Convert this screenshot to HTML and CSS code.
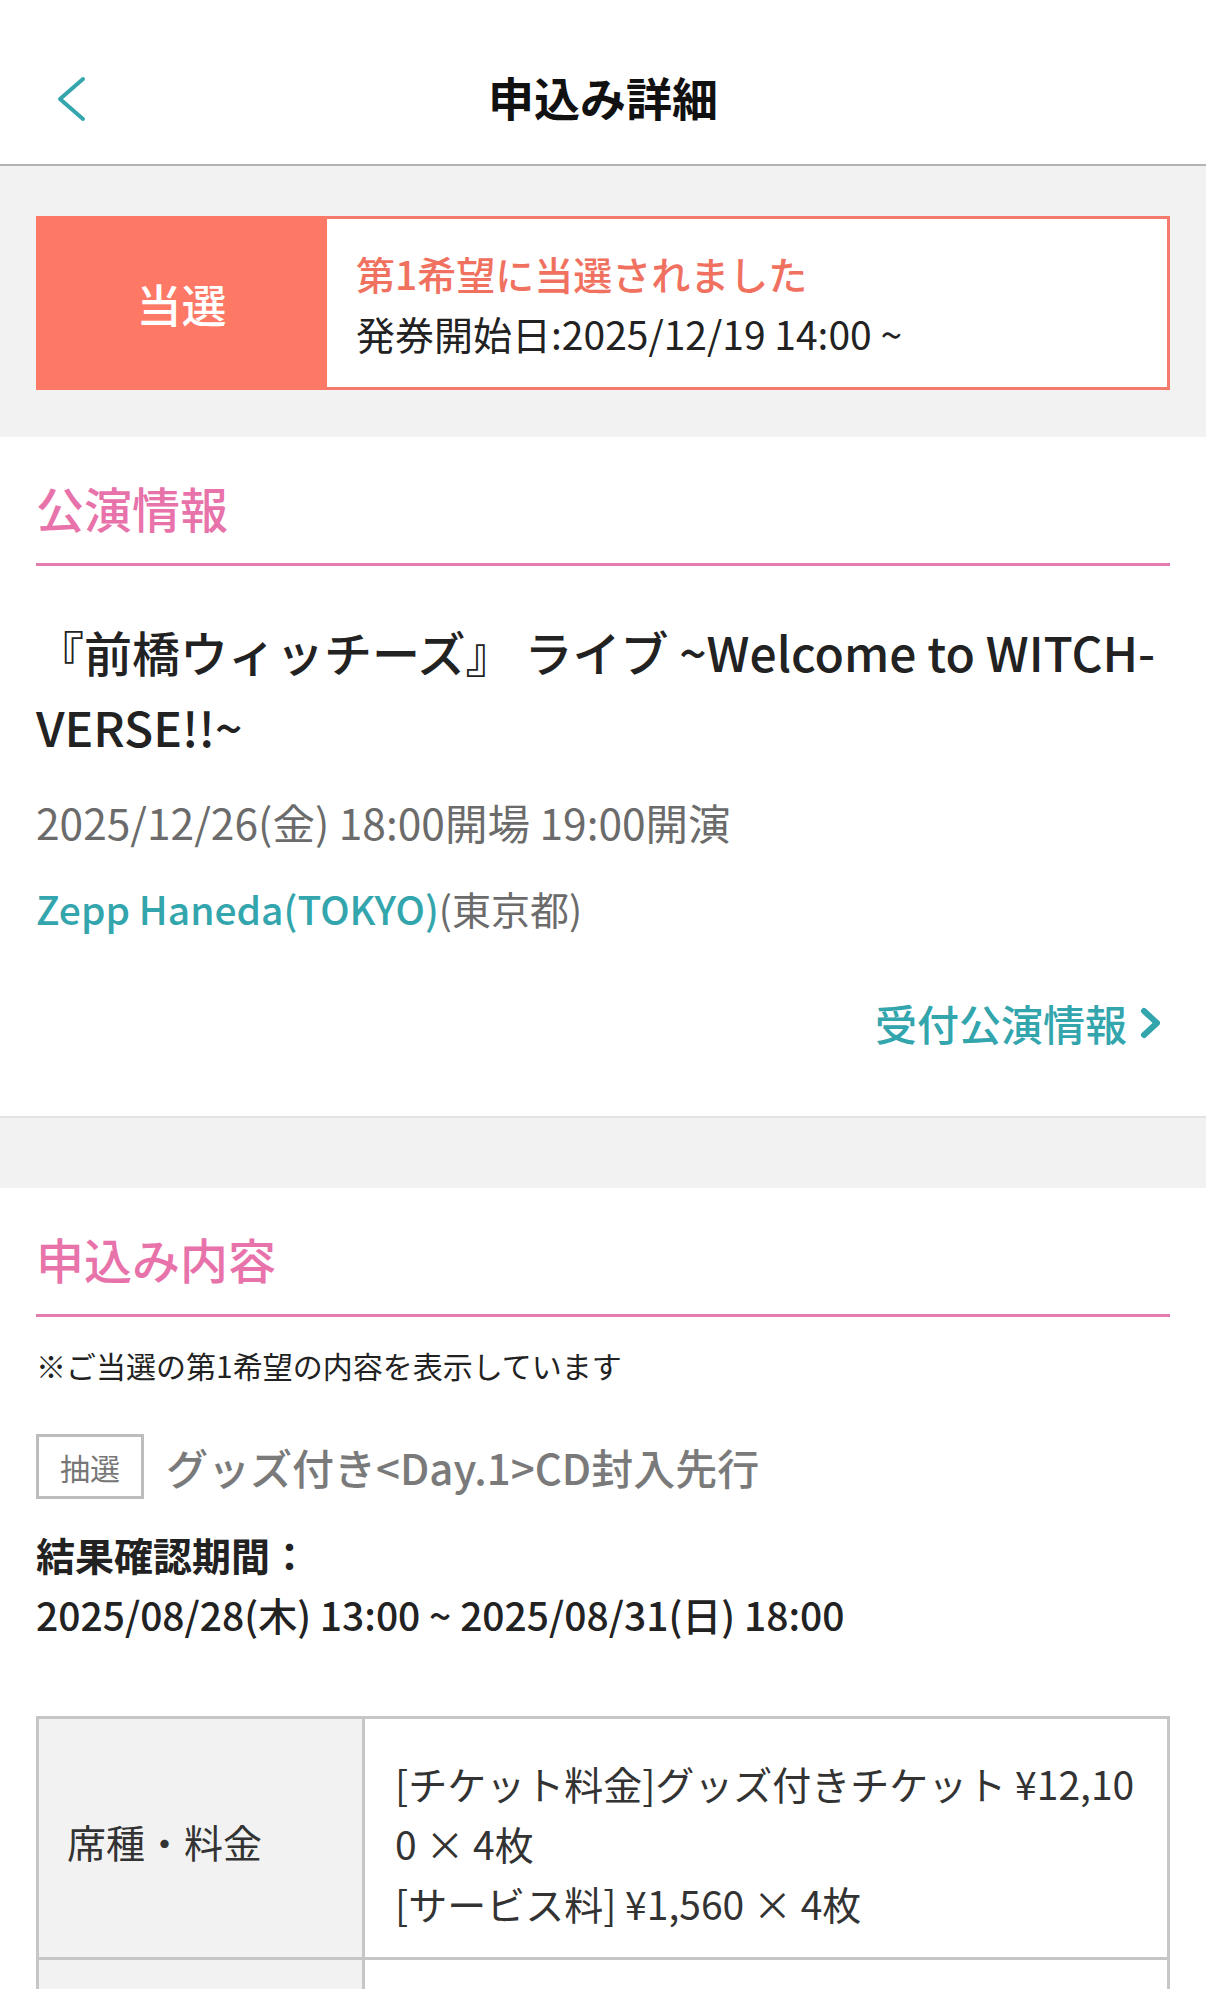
FILE: index.html
```html
<!DOCTYPE html>
<html lang="ja">
<head>
<meta charset="utf-8">
<title>申込み詳細</title>
<link rel="stylesheet" href="styles.css">
</head>
<body>
<header class="topbar">
  <button class="back" type="button" aria-label="戻る">
    <svg width="30" height="46" viewBox="0 0 30 46"><polyline points="26,3 3,23 26,43" fill="none" stroke="#36a6ae" stroke-width="4" stroke-linecap="round" stroke-linejoin="round"/></svg>
  </button>
  <h1 class="title">申込み詳細</h1>
</header>

<div class="status-area">
  <div class="result-banner">
    <div class="result-label">当選</div>
    <div class="result-body">
      <p class="result-title">第1希望に当選されました</p>
      <p class="result-date">発券開始日:2025/12/19 14:00 ~</p>
    </div>
  </div>
</div>

<section class="panel panel-event">
  <h2 class="section-heading">公演情報</h2>
  <p class="event-title">『前橋ウィッチーズ』 ライブ ~Welcome to WITCH-VERSE!!~</p>
  <p class="event-date">2025/12/26(金) 18:00開場 19:00開演</p>
  <p class="event-venue"><span class="venue-name">Zepp Haneda(TOKYO)</span>(東京都)</p>
  <div class="link-row">
    <a class="event-link" href="#">受付公演情報<svg width="22" height="32" viewBox="0 0 22 32"><polyline points="4,4 17,16 4,28" fill="none" stroke="#33a5ad" stroke-width="6" stroke-linecap="round" stroke-linejoin="round"/></svg></a>
  </div>
</section>

<section class="panel panel-apply">
  <h2 class="section-heading">申込み内容</h2>
  <p class="note">※ご当選の第1希望の内容を表示しています</p>
  <div class="plan-row">
    <span class="badge">抽選</span>
    <span class="plan-name">グッズ付き&lt;Day.1&gt;CD封入先行</span>
  </div>
  <p class="period-label">結果確認期間：</p>
  <p class="period-value">2025/08/28(木) 13:00 ~ 2025/08/31(日) 18:00</p>
  <table class="detail-table">
    <colgroup><col class="col-head"><col class="col-body"></colgroup>
    <tr>
      <th>席種・料金</th>
      <td>[チケット料金]グッズ付きチケット ¥12,100 × 4枚<br>[サービス料] ¥1,560 × 4枚</td>
    </tr>
    <tr class="row-more">
      <th></th>
      <td></td>
    </tr>
  </table>
</section>
</body>
</html>
```

FILE: styles.css
```css
html, body {
  margin: 0;
  padding: 0;
}
body {
  background: #f2f2f2;
  font-family: "Noto Sans CJK JP", "Noto Sans", sans-serif;
  color: #222;
}
p, h1, h2 {
  margin: 0;
}

.topbar {
  box-sizing: border-box;
  height: 166px;
  padding: 56px 0 28px;
  background: #fff;
  border-bottom: 2px solid #b3b3b3;
  display: grid;
  grid-template-columns: 1fr auto 1fr;
  align-items: center;
}
.back {
  justify-self: start;
  margin-left: 57px;
  margin-top: 6px;
  padding: 0;
  border: 0;
  background: none;
  display: flex;
}
.title {
  font-size: 46px;
  font-weight: 700;
  line-height: 1;
  color: #111;
}

.status-area {
  padding: 50px 36px 47px;
}
.result-banner {
  display: flex;
  height: 174px;
  box-sizing: border-box;
}
.result-label {
  width: 291px;
  flex: none;
  background: #fe7866;
  color: #fff;
  font-size: 45px;
  font-weight: 500;
  display: flex;
  align-items: center;
  justify-content: center;
}
.result-body {
  flex: 1;
  background: #fff;
  border: 3px solid #f47a6b;
  border-left: 0;
  padding: 0 29px;
  display: flex;
  flex-direction: column;
  justify-content: center;
}
.result-title {
  font-size: 39px;
  line-height: 60px;
  font-weight: 500;
  color: #f0715f;
}
.result-date {
  font-size: 39px;
  line-height: 60px;
  color: #222;
}

.panel {
  background: #fff;
  padding: 34px 36px 0;
}
.panel-event {
  padding-bottom: 63px;
  border-bottom: 2px solid #e3e3e3;
  margin-bottom: 70px;
}
.section-heading {
  font-size: 48px;
  line-height: 72px;
  font-weight: 500;
  color: #e872aa;
  padding-bottom: 20px;
  border-bottom: 3px solid #e67bb0;
}
.event-title {
  margin-top: 48px;
  font-size: 48px;
  line-height: 75px;
  font-weight: 500;
  color: #222;
}
.event-date {
  margin-top: 28px;
  font-size: 42.5px;
  line-height: 60px;
  color: #6b6b6b;
}
.event-venue {
  margin-top: 26px;
  font-size: 39px;
  line-height: 60px;
  color: #6b6b6b;
}
.venue-name {
  color: #33a5ad;
  font-weight: 500;
}
.link-row {
  margin-top: 55px;
  display: flex;
  justify-content: flex-end;
}
.event-link {
  display: flex;
  align-items: center;
  gap: 13px;
  margin-right: 8px;
  font-size: 42px;
  line-height: 60px;
  font-weight: 500;
  color: #33a5ad;
  text-decoration: none;
}

.note {
  margin-top: 26px;
  font-size: 30px;
  line-height: 45px;
  color: #222;
}
.plan-row {
  margin-top: 46px;
  display: flex;
  align-items: center;
  gap: 22px;
}
.badge {
  box-sizing: border-box;
  height: 65px;
  padding: 0 21px;
  border: 3px solid #bdbdbd;
  font-size: 30px;
  line-height: 1;
  color: #777;
  display: flex;
  align-items: center;
}
.plan-name {
  font-size: 42px;
  line-height: 60px;
  font-weight: 500;
  color: #7a7a7a;
}
.period-label {
  margin-top: 25px;
  font-size: 39px;
  line-height: 60px;
  font-weight: 700;
  color: #222;
}
.period-value {
  font-size: 39px;
  line-height: 60px;
  font-weight: 500;
  color: #222;
}

.detail-table {
  margin-top: 72px;
  width: 100%;
  border-collapse: collapse;
  table-layout: fixed;
}
.col-head {
  width: 326px;
}
.detail-table th,
.detail-table td {
  border: 3px solid #c6c6c6;
  font-size: 39px;
  line-height: 60px;
  color: #333;
  font-weight: 400;
}
.detail-table th {
  background: #f2f2f2;
  text-align: left;
  padding: 6px 0 0 28px;
}
.detail-table td {
  background: #fff;
  padding: 34px 29px 24px 30px;
  word-break: break-all;
}
.row-more th,
.row-more td {
  height: 120px;
}
```
